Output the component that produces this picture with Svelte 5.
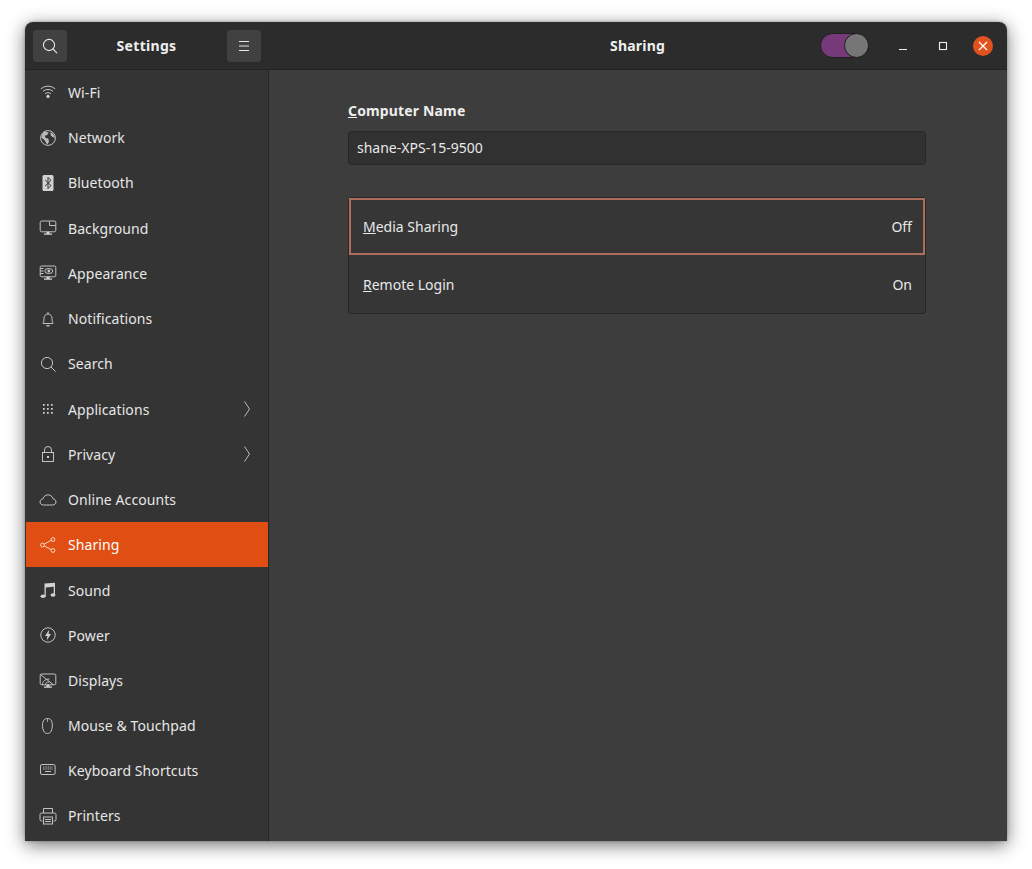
<script>
  const items = [
    { id: 'wifi', label: 'Wi-Fi' }, { id: 'network', label: 'Network' }, { id: 'bluetooth', label: 'Bluetooth' },
    { id: 'background', label: 'Background' }, { id: 'appearance', label: 'Appearance' }, { id: 'bell', label: 'Notifications' },
    { id: 'search', label: 'Search' }, { id: 'apps', label: 'Applications', more: true }, { id: 'lock', label: 'Privacy', more: true },
    { id: 'cloud', label: 'Online Accounts' }, { id: 'share', label: 'Sharing', active: true }, { id: 'music', label: 'Sound' },
    { id: 'power', label: 'Power' }, { id: 'displays', label: 'Displays' }, { id: 'mouse', label: 'Mouse & Touchpad' },
    { id: 'keyboard', label: 'Keyboard Shortcuts' }, { id: 'printer', label: 'Printers' }
  ];
</script>

<div class="page">
<div class="window">
  <header class="titlebar">
    <div class="head-left">
      <button class="hbtn" aria-label="Search">
        <svg width="16" height="16" viewBox="0 0 16 16" fill="none" stroke="#e6e6e6" stroke-width="1.1"><circle cx="7" cy="7" r="5.6"/><path d="M11 11l3.8 3.8" stroke-linecap="round"/></svg>
      </button>
      <span class="title">Settings</span>
      <button class="hbtn" aria-label="Menu">
        <svg width="12" height="12" viewBox="0 0 12 12" stroke="#e6e6e6" stroke-width="1"><path d="M1 1.500h10M1 6h10M1 10.500h10"/></svg>
      </button>
    </div>
    <div class="head-right">
      <span class="title main-title">Sharing</span>
      <div class="controls">
        <span class="toggle"><span class="knob"></span></span>
        <span class="wbtn"><svg width="10" height="10" viewBox="0 0 10 10" stroke="#eee" stroke-width="1.1"><path d="M1 8.500h8"/></svg></span>
        <span class="wbtn"><svg width="10" height="10" viewBox="0 0 10 10" fill="none" stroke="#eee" stroke-width="1.1"><rect x="1.500" y="1.500" width="7" height="7"/></svg></span>
        <span class="wbtn close"><svg width="10" height="10" viewBox="0 0 10 10" stroke="#fff" stroke-width="1.2"><path d="M1 1l8 8M9 1l-8 8"/></svg></span>
      </div>
    </div>
  </header>
  <div class="body">
    <nav class="sidebar">
      {#each items as it}
        <div class="row" class:active={it.active}>
          <span class="ico">
            <svg width="18" height="18" viewBox="0 0 18 18" fill="none" stroke="currentColor" stroke-width="0.9">
              {#if it.id === 'wifi'}
                <path d="M1.800 5.800a11 11 0 0 1 14.400 0M4 8.300a7.600 7.600 0 0 1 10 0M6.200 10.700a4.200 4.200 0 0 1 5.600 0"/><circle cx="9" cy="13.400" r="1.600" fill="currentColor" stroke="none"/>
              {:else if it.id === 'network'}
                <circle cx="9" cy="9" r="7.400"/><path fill="currentColor" stroke="none" opacity=".85" d="M6 2.600c2 .4 2.800 1 3.600 1.400L8.200 6 5.800 6.800 6.600 9 9.200 9.600 10 12.400 8.600 15.400C6.600 13.800 6.200 11.600 4.800 10.400L2.400 8.400C2.800 5.800 4 3.800 6 2.600ZM11.400 3.200C13.600 4 15.400 6 15.800 8.800L14 8.200 11.800 6.400Z"/>
              {:else if it.id === 'bluetooth'}
                <rect x="3.500" y="1" width="11" height="16" rx="1.500" fill="currentColor" stroke="none"/><path stroke="#333" stroke-width="1" d="M6 5.800l6 5.800-3 3V3.400l3 3-6 5.800"/>
              {:else if it.id === 'background'}
                <rect x="1.200" y="2" width="15.600" height="10.800" rx="1.500"/><path d="M10.500 2.500v4h6"/><path fill="currentColor" stroke="none" d="M7.500 12.800h3v1.700h2.500v1.300H5v-1.300h2.500Z"/>
              {:else if it.id === 'appearance'}
                <rect x="1.200" y="2" width="15.600" height="10.800" rx="1.500"/><path d="M1.500 4.500h3M1.500 7h3M1.500 9.500h3"/><ellipse cx="9.800" cy="7" rx="4" ry="2.500"/><circle cx="9.800" cy="7" r="1" fill="currentColor"/><path fill="currentColor" stroke="none" d="M7.500 12.800h3v1.700h2.500v1.300H5v-1.300h2.500Z"/>
              {:else if it.id === 'bell'}
                <path d="M4 13.500v-.8c1-.8 1-2 1-4.200 0-2.600 1.600-4.500 4-4.500s4 1.900 4 4.500c0 2.200 0 3.400 1 4.200v.8Z"/><path d="M9 2v2"/><path stroke-width="1.300" d="M7.500 15.800h3"/>
              {:else if it.id === 'search'}
                <circle cx="8" cy="8" r="5.600"/><path d="M12 12l4.300 4.300" stroke-linecap="round"/>
              {:else if it.id === 'apps'}
                <path fill="currentColor" stroke="none" d="M4 4h1.700v1.700H4ZM8 4h1.700v1.700H8ZM12 4h1.700v1.700h-1.700ZM4 8h1.700v1.700H4ZM8 8h1.700v1.700H8ZM12 8h1.700v1.700h-1.700ZM4 12h1.700v1.700H4ZM8 12h1.700v1.700H8ZM12 12h1.700v1.700h-1.700Z"/>
              {:else if it.id === 'lock'}
                <rect x="3.500" y="7.500" width="11" height="9"/><path d="M5.500 7.500V5a3.500 3.500 0 0 1 7 0v2.500"/><rect x="8" y="11" width="2" height="2" fill="currentColor" stroke="none"/>
              {:else if it.id === 'cloud'}
                <path d="M4.500 14C2.500 14 1 12.700 1 11s1.300-2.900 2.900-3C4.400 5.600 6.500 3.800 9 3.800c2.600 0 4.500 1.700 5 4 1.700.2 3 1.500 3 3.200s-1.500 3-3.500 3Z"/>
              {:else if it.id === 'share'}
                <circle cx="3.500" cy="9" r="1.900"/><circle cx="14" cy="3.500" r="1.900"/><circle cx="14" cy="14.500" r="1.900"/><path d="M5.300 8l6.900-3.600M5.300 10l6.900 3.600"/>
              {:else if it.id === 'music'}
                <path fill="currentColor" stroke="none" d="M5.500 2.500l10.500-.8v12.300h-1.300V5.800L6.800 6.500V15.500H5.500Z"/><ellipse cx="4" cy="15.300" rx="2.500" ry="1.800" fill="currentColor" stroke="none"/><ellipse cx="14" cy="14" rx="2.500" ry="1.800" fill="currentColor" stroke="none"/>
              {:else if it.id === 'power'}
                <circle cx="9" cy="9" r="7.200"/><path fill="currentColor" stroke="none" d="M10.200 3.800 6 10h2.400L7.800 14.200 12 8H9.600Z"/>
              {:else if it.id === 'displays'}
                <rect x="1.200" y="2" width="15.600" height="10.800" rx="1.500"/><path d="M1.500 2.500 14 12.500M3.500 12.500c0-3 2.500-5.500 7-5.500M6.500 12.500c0-1.500 1-2.500 3.500-2.500"/><path fill="currentColor" stroke="none" d="M7.500 12.800h3v1.700h2.500v1.300H5v-1.300h2.500Z"/>
              {:else if it.id === 'mouse'}
                <path d="M8.500 1.500c3 0 4.800 2.300 4.800 6.500 0 5-1.500 8.500-4.800 8.500S3.500 13 3.500 8c0-4.200 2-6.500 5-6.500Z"/><path d="M8.500 1.500v3.500" stroke-width=".7"/>
              {:else if it.id === 'keyboard'}
                <rect x="1.500" y="3.500" width="14.600" height="10" rx="1.500"/><path stroke-dasharray="1 .7" d="M4 6h10M4 8h10"/><path d="M6 10.500h6"/>
              {:else if it.id === 'printer'}
                <path d="M4.500 6V1.500h9V6"/><path d="M3.500 14H2.500A1.500 1.500 0 0 1 1 12.500V7.500A1.500 1.500 0 0 1 2.500 6h13A1.500 1.500 0 0 1 17 7.500v5a1.500 1.500 0 0 1-1.500 1.500h-1"/><rect x="4.500" y="10" width="9" height="7"/><path d="M6 12.500h6M6 14.500h6"/>
              {/if}
            </svg>
          </span>
          <span class="label">{it.label}</span>
          {#if it.more}
            <svg class="chev" width="8" height="16" viewBox="0 0 8 16" fill="none" stroke="#c8c8c8" stroke-width="0.9"><path d="M1.500 .5 6.500 8l-5 7.500"/></svg>
          {/if}
        </div>
      {/each}
    </nav>
    <main class="content">
      <div class="col">
        <h2 class="name-label"><u>C</u>omputer Name</h2>
        <div class="entry"><span class="entry-text">shane-XPS-15-9500</span></div>
        <div class="list">
          <div class="lrow focus"><span><u>M</u>edia Sharing</span><span>Off</span></div>
          <div class="lrow second"><span><u>R</u>emote Login</span><span>On</span></div>
        </div>
      </div>
    </main>
  </div>
</div>
</div>

<style>
  :global(body) { margin: 0; background: #fff; }
  .page { height: 869px; box-sizing: border-box; padding: 22px 25px 28px; }
  .window {
    width: 982px; height: 819px;
    display: flex; flex-direction: column;
    border-radius: 8px 8px 0 0; overflow: hidden;
    box-shadow: 0 4px 18px rgba(0,0,0,.55), 0 0 3px rgba(0,0,0,.3);
    font-family: "Noto Sans", sans-serif; font-size: 14px; color: #e8e8e8;
  }
  .titlebar { height: 48px; flex: none; display: flex; background: #2c2c2c; border-bottom: 1px solid #232323; box-sizing: border-box; }
  .head-left { width: 244px; flex: none; display: flex; align-items: center; justify-content: space-between; padding: 0 8px; box-sizing: border-box; }
  .head-right { flex: 1; position: relative; display: flex; align-items: center; justify-content: center; }
  .title { font-weight: 700; font-size: 14px; color: #efefef; letter-spacing: .3px; margin-right: 1px; }
  .main-title { letter-spacing: .2px; margin: 0 0 0 -1px; }
  .hbtn { width: 34px; height: 32px; border: 0; border-radius: 4px; background: #414141; display: flex; align-items: center; justify-content: center; padding: 0; }
  .controls { position: absolute; right: 0; top: 0; bottom: 0; display: flex; align-items: center; }
  .toggle { width: 49px; height: 25px; border-radius: 13px; background: #763a7b; border: 1px solid #1e1e1e; box-sizing: border-box; margin-right: 24px; position: relative; display: block; }
  .knob { position: absolute; right: -1px; top: -1px; width: 25px; height: 25px; box-sizing: border-box; border-radius: 50%; background: #767676; border: 1px solid #1c1c1c; }
  .wbtn { width: 20px; height: 20px; border-radius: 50%; display: flex; align-items: center; justify-content: center; margin-right: 20px; }
  .wbtn.close { background: #e2521e; margin-right: 14px; }
  .body { flex: 1; display: flex; min-height: 0; }
  .sidebar { width: 244px; flex: none; background: #343434; border-right: 1px solid #262626; box-sizing: border-box; padding-left: 1px; overflow: hidden; }
  .row { height: 45.25px; display: flex; align-items: center; position: relative; color: #e6e6e6; letter-spacing: .08px; }
  .row:first-child { margin-top: -.3px; }
  .row:nth-child(15) { height: 44.6px; }
  .row.active { background: #e14e14; color: #fff; }
  .ico { width: 42px; padding-left: 13px; box-sizing: border-box; flex: none; display: flex; color: #d2d2d2; }
  .row.active .ico { color: #fbe3d8; }
  .label { white-space: nowrap; }
  .chev { position: absolute; right: 17px; top: 14.500px; }
  .content { flex: 1; background: #3d3d3d; display: flex; justify-content: center; }
  .col { width: 578px; padding-top: 31px; margin-left: -2px; }
  .name-label { margin: 0 0 11px; font-size: 14px; font-weight: 700; line-height: 19px; color: #eee; letter-spacing: .15px; }
  .entry { height: 34px; box-sizing: border-box; background: #313131; border: 1px solid #272727; border-radius: 4px; padding: 0 8px 2px; display: flex; align-items: center; }
  .entry-text { display: block; }
  .list { margin-top: 32px; background: #363636; border: 1px solid #272727; border-radius: 3px; }
  .lrow { display: flex; justify-content: space-between; align-items: center; padding: 0 13px 0 14px; box-sizing: border-box; }
  .focus { height: 57px; border: 2px solid #ad6f5c; padding: 0 11px 0 12px; }
  .second { height: 58px; }
</style>
